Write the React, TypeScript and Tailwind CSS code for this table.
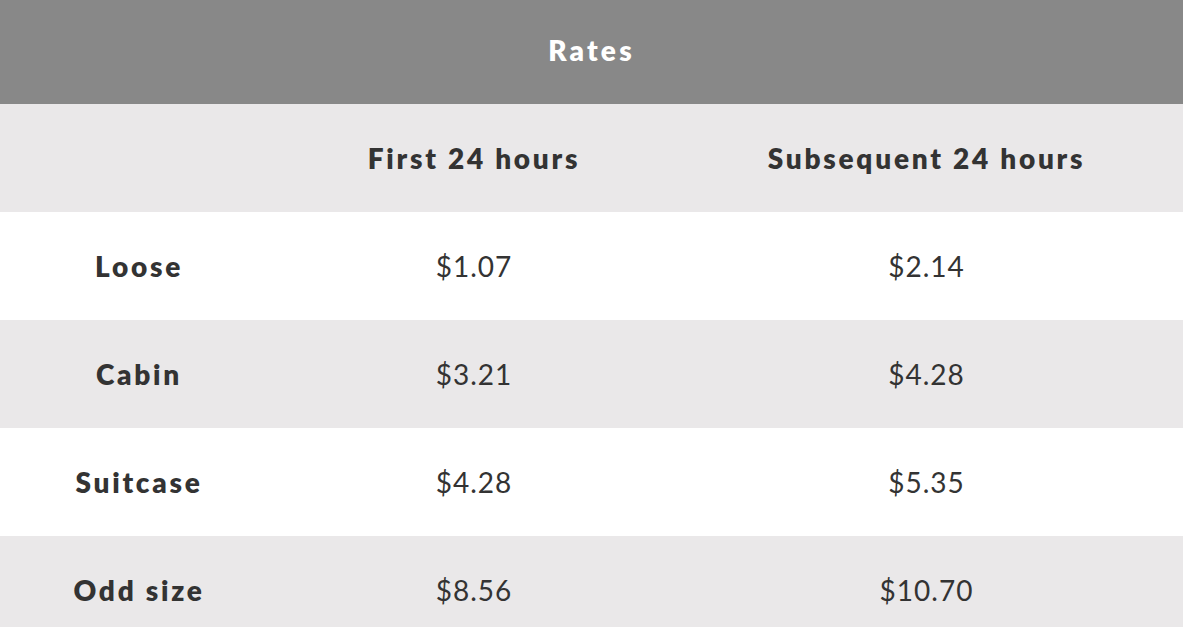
import React from 'react';

const rows = [
  { name: 'Loose', first: '$1.07', next: '$2.14' },
  { name: 'Cabin', first: '$3.21', next: '$4.28' },
  { name: 'Suitcase', first: '$4.28', next: '$5.35' },
  { name: 'Odd size', first: '$8.56', next: '$10.70' },
];

export default function App() {
  return (
    <div className="w-[1183px] h-[627px] overflow-hidden bg-white font-['Lato',sans-serif] text-[#333333]">
      {/* Title bar */}
      <div className="h-[104px] bg-[#888888] flex items-center justify-center">
        <span className="text-white text-[28px] font-extrabold tracking-[3.2px] pb-[4px]">Rates</span>
      </div>

      {/* Column header */}
      <div className="grid grid-cols-[278px_392px_1fr] h-[108px] bg-[#eae8e9] items-center text-[28px] font-extrabold tracking-[2.75px]">
        <div />
        <div className="text-center pb-[1px]">First 24 hours</div>
        <div className="text-center pb-[1px]">Subsequent 24 hours</div>
      </div>

      {rows.map((r, i) => (
        <div
          key={r.name}
          className={`grid grid-cols-[278px_392px_1fr] h-[108px] items-center text-[28px] tracking-[1px] ${i % 2 === 1 ? 'bg-[#eae8e9]' : 'bg-white'}`}
        >
          <div className="text-center font-extrabold tracking-[2.75px]">{r.name}</div>
          <div className="text-center">{r.first}</div>
          <div className="text-center">{r.next}</div>
        </div>
      ))}
    </div>
  );
}
